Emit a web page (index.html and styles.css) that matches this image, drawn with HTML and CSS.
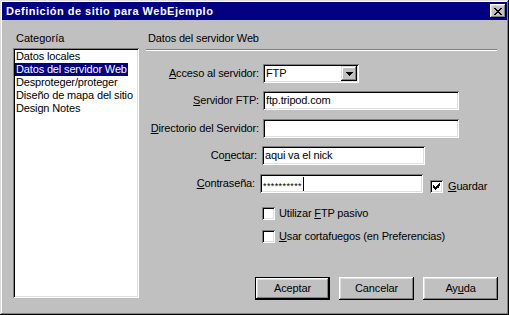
FILE: index.html
```html
<!DOCTYPE html>
<html lang="es">
<head>
<meta charset="utf-8">
<title>Definición de sitio</title>
<link rel="stylesheet" href="styles.css">
</head>
<body>
<div class="window">
  <div class="titlebar">
    <span class="title">Definición de sitio para WebEjemplo</span>
    <div class="close"><svg width="8" height="7" viewBox="0 0 8 7" shape-rendering="crispEdges"><path d="M0 0h2v1H0zM6 0h2v1H6zM1 1h2v1H1zM5 1h2v1H5zM2 2h4v1H2zM3 3h2v1H3zM2 4h4v1H2zM1 5h2v1H1zM5 5h2v1H5zM0 6h2v1H0zM6 6h2v1H6z" fill="#000"/></svg></div>
  </div>
  <div class="content">
    <div class="leftcol">
      <div class="cat-label">Categoría</div>
      <div class="listbox">
        <div class="item"><span class="txt">Datos locales</span></div>
        <div class="item"><span class="txt sel">Datos del servidor Web</span></div>
        <div class="item"><span class="txt">Desproteger/proteger</span></div>
        <div class="item"><span class="txt">Diseño de mapa del sitio</span></div>
        <div class="item"><span class="txt">Design Notes</span></div>
      </div>
    </div>
    <div class="rightcol">
      <div class="header">Datos del servidor Web</div>
      <div class="separator"></div>
      <div class="form">
        <div class="row">
          <div class="label"><u>A</u>cceso al servidor:</div>
          <div class="field select w96"><span class="val">FTP</span><span class="dd"><svg width="7" height="4" viewBox="0 0 7 4" shape-rendering="crispEdges"><path d="M0 0h7v1H0zM1 1h5v1H1zM2 2h3v1H2zM3 3h1v1H3z" fill="#000"/></svg></span></div>
        </div>
        <div class="row g8">
          <div class="label"><u>S</u>ervidor FTP:</div>
          <div class="field w196">ftp.tripod.com</div>
        </div>
        <div class="row g9">
          <div class="label"><u>D</u>irectorio del Servidor:</div>
          <div class="field w196"></div>
        </div>
        <div class="row g8">
          <div class="label l116">Co<u>n</u>ectar:</div>
          <div class="field w163">aqui va el nick</div>
        </div>
        <div class="row g9">
          <div class="label l114"><u>C</u>ontraseña:</div>
          <div class="field w163"><span class="stars">**********</span><span class="caret"></span></div>
          <div class="check guard"><svg width="7" height="7" viewBox="0 0 7 7" shape-rendering="crispEdges"><path d="M6 0h1v3H6zM5 1h1v4H5zM4 2h1v3H4zM0 2h1v3H0zM1 3h1v3H1zM2 4h1v3H2zM3 3h1v3H3z" fill="#000"/></svg></div>
          <span class="cblabel"><u>G</u>uardar</span>
        </div>
        <div class="cbrow g14">
          <div class="check"></div>
          <span class="cblabel">Utilizar <u>F</u>TP pasivo</span>
        </div>
        <div class="cbrow g10">
          <div class="check"></div>
          <span class="cblabel"><u>U</u>sar cortafuegos (en Preferencias)</span>
        </div>
      </div>
      <div class="buttons">
        <div class="btn default"><span>Aceptar</span></div>
        <div class="btn"><span>Cancelar</span></div>
        <div class="btn"><span>Ay<u>u</u>da</span></div>
      </div>
    </div>
  </div>
</div>
</body>
</html>
```

FILE: styles.css
```css
* { box-sizing: border-box; }
html, body { margin: 0; padding: 0; }
body {
  width: 509px;
  height: 315px;
  overflow: hidden;
  background: #c0c0c0;
  font-family: "Liberation Sans", Arial, sans-serif;
  font-size: 11px;
  line-height: 13px;
  letter-spacing: -0.15px;
  color: #000;
}
.window {
  width: 509px;
  height: 315px;
  padding: 2px;
  background: #c0c0c0;
  box-shadow: inset -1px -1px #000, inset 1px 1px #dfdfdf, inset -2px -2px #808080, inset 2px 2px #fff;
  display: flex;
  flex-direction: column;
}
.titlebar {
  height: 18px;
  background: #000080;
  display: flex;
  align-items: center;
  justify-content: space-between;
  padding: 0 1px 0 4px;
}
.title {
  color: #fff;
  font-weight: bold;
  font-size: 11px;
  line-height: 13px;
  letter-spacing: 0.5px;
}
.close {
  width: 16px;
  height: 14px;
  background: #c0c0c0;
  box-shadow: inset -1px -1px #000, inset 1px 1px #fff, inset -2px -2px #808080, inset 2px 2px #dfdfdf;
  display: flex;
  align-items: center;
  justify-content: center;
  padding-right: 1px;
}
.close svg { display: block; }
.content {
  display: flex;
  align-items: flex-start;
  padding: 12px 0 0 11px;
  gap: 7px;
}
.leftcol { width: 126px; }
.cat-label { padding-left: 3px; letter-spacing: 0; }
.listbox {
  margin-top: 3px;
  width: 126px;
  height: 250px;
  background: #fff;
  padding: 2px;
  box-shadow: inset 1px 1px #808080, inset -1px -1px #fff, inset 2px 2px #000, inset -2px -2px #dfdfdf;
}
.item { height: 13px; white-space: nowrap; }
.txt { display: inline-block; padding: 0 1px; height: 13px; }
.sel { background: #000080; color: #fff; }
.rightcol { width: 352px; }
.header { padding-left: 2px; }
.separator {
  margin-top: 4px;
  width: 351px;
  height: 2px;
  border-top: 1px solid #808080;
  border-bottom: 1px solid #fff;
}
.form { margin-top: 13px; }
.row { display: flex; align-items: center; height: 19px; }
.g8 { margin-top: 8px; }
.g9 { margin-top: 9px; }
.g10 { margin-top: 10px; }
.g14 { margin-top: 14px; }
.label {
  width: 117px;
  padding-right: 4px;
  text-align: right;
  white-space: nowrap;
}
.l116 { width: 116px; padding-right: 5px; }
.l114 { width: 114px; padding-right: 5px; }
.field {
  height: 19px;
  background: #fff;
  padding: 0 2px 0 3px;
  line-height: 15px;
  display: flex;
  align-items: center;
  white-space: nowrap;
  box-shadow: inset 1px 1px #808080, inset -1px -1px #fff, inset 2px 2px #000, inset -2px -2px #dfdfdf;
}
.w96 { width: 96px; }
.w196 { width: 196px; }
.w163 { width: 163px; }
.select { padding: 2px 2px 2px 3px; justify-content: space-between; }
.dd {
  width: 16px;
  height: 15px;
  background: #c0c0c0;
  box-shadow: inset -1px -1px #000, inset 1px 1px #dfdfdf, inset -2px -2px #808080, inset 2px 2px #fff;
  display: flex;
  align-items: center;
  justify-content: center;
}
.dd svg { display: block; }
.stars { font-size: 9px; letter-spacing: 0.4px; margin-top: 5px; }
.caret { display: inline-block; width: 1px; height: 14px; background: #000; margin-left: 1px; }
.check {
  width: 13px;
  height: 13px;
  background: #fff;
  flex: none;
  box-shadow: inset 1px 1px #808080, inset -1px -1px #fff, inset 2px 2px #000, inset -2px -2px #dfdfdf;
  display: flex;
  align-items: center;
  justify-content: center;
}
.check svg { display: block; }
.guard { margin-left: 7px; margin-top: 5px; }
.row .cblabel { margin-left: 5px; margin-top: 5px; }
.cbrow { display: flex; align-items: center; height: 13px; padding-left: 116px; }
.cbrow .cblabel { margin-left: 4px; white-space: nowrap; }
.buttons {
  margin-top: 34px;
  display: flex;
  justify-content: flex-end;
  gap: 9px;
}
.btn {
  width: 75px;
  height: 23px;
  background: #c0c0c0;
  display: flex;
  align-items: center;
  justify-content: center;
  box-shadow: inset -1px -1px #000, inset 1px 1px #fff, inset -2px -2px #808080, inset 2px 2px #dfdfdf;
}
.btn.default {
  border: 1px solid #000;
}
```
